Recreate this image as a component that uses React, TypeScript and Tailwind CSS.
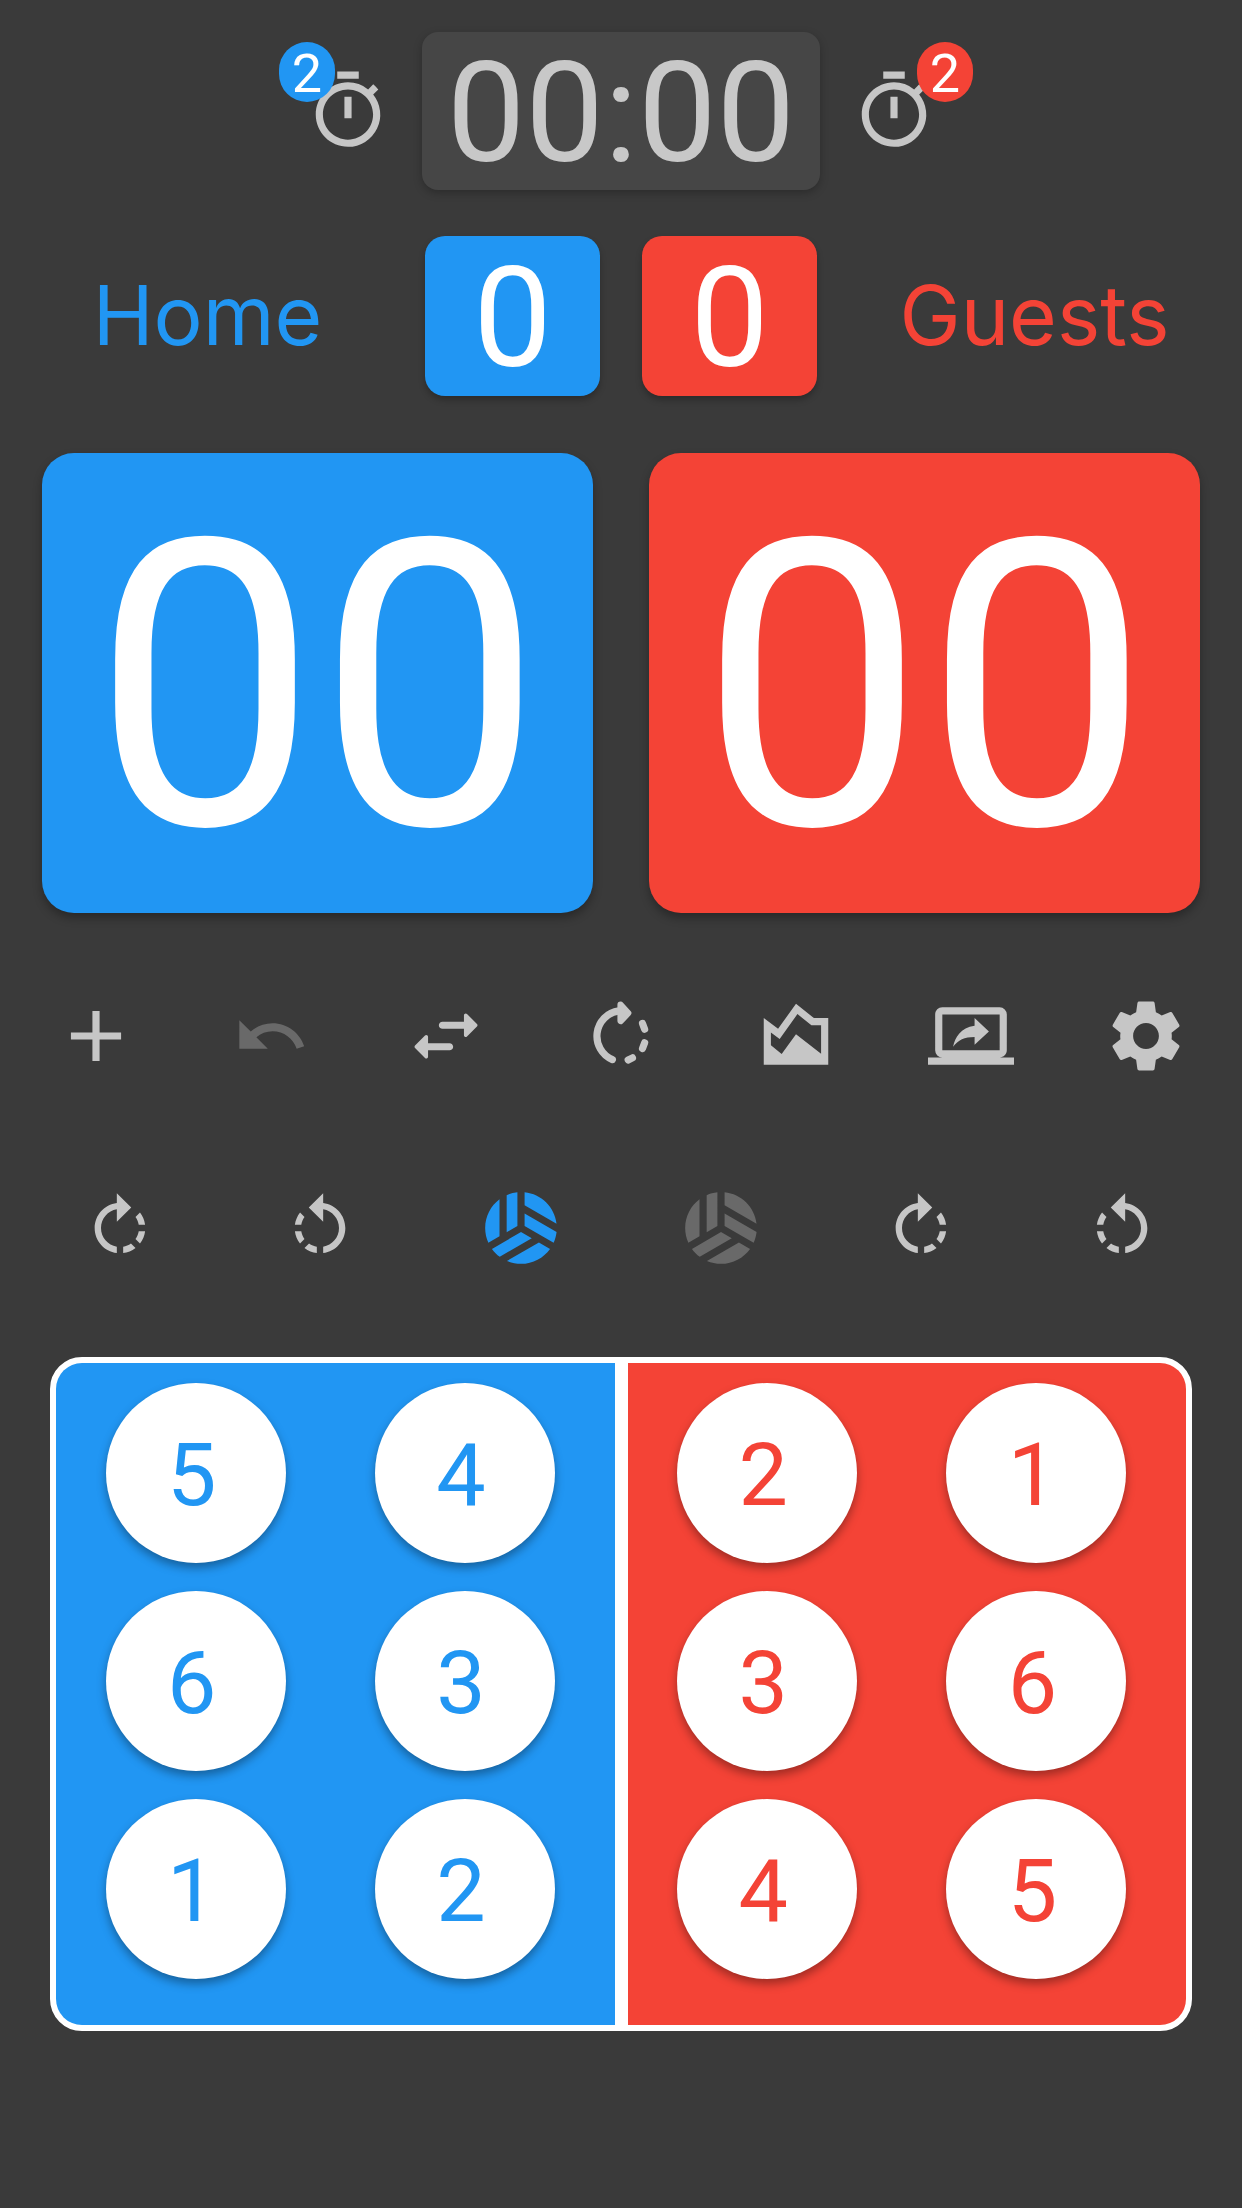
import * as React from "react";
import clsx from "clsx";
import {
  MdAdd,
  MdOutlineAreaChart,
  MdOutlineScreenShare,
  MdOutlineTimer,
  MdRotateLeft,
  MdRotateRight,
  MdSettings,
  MdSportsVolleyball,
  MdUndo,
} from "react-icons/md";

type Team = "home" | "guests";

const teamBg: Record<Team, string> = {
  home: "bg-[#2196f3]",
  guests: "bg-[#f44336]",
};

const teamText: Record<Team, string> = {
  home: "text-[#2196f3]",
  guests: "text-[#f44336]",
};

const lineups: Record<Team, number[]> = {
  home: [5, 4, 6, 3, 1, 2],
  guests: [2, 1, 3, 6, 4, 5],
};

const SwapIcon = ({ className }: { className?: string }) => (
  <svg viewBox="0 0 24 24" fill="currentColor" className={className} aria-hidden="true">
    <path d="M6.14 11.86l-2.78 2.79c-.19.2-.19.51 0 .71l2.78 2.79c.31.32.85.09.85-.35V16H13c.55 0 1-.45 1-1s-.45-1-1-1H6.99v-1.79c0-.45-.54-.67-.85-.35zM20.64 8.65l-2.78-2.79c-.31-.32-.85-.09-.85.35V8H11c-.55 0-1 .45-1 1s.45 1 1 1h6.01v1.79c0 .45.54.67.85.35l2.78-2.79c.2-.19.2-.51 0-.7z" />
  </svg>
);

const RotateRoundedIcon = ({ className }: { className?: string }) => (
  <svg
    viewBox="0 0 24 24"
    fill="none"
    stroke="currentColor"
    strokeWidth="2"
    strokeLinecap="round"
    strokeLinejoin="round"
    className={className}
    aria-hidden="true"
  >
    <path d="M11.4 5a7 7.1 0 0 0-1.8 13.6" />
    <path d="M18 8.5l.6 1.6M18.6 13.9l-.6 1.6M15.2 18.1l-1.2.6" />
    <path d="M11.9 3.3l2.1 2.3-2.1 2.2z" fill="currentColor" strokeWidth="1.8" />
  </svg>
);

const toolbar = [
  { label: "New match", icon: MdAdd },
  { label: "Undo", icon: MdUndo, disabled: true, small: true },
  { label: "Swap sides", icon: SwapIcon },
  { label: "Rotate", icon: RotateRoundedIcon },
  { label: "Statistics", icon: MdOutlineAreaChart },
  { label: "Share screen", icon: MdOutlineScreenShare },
  { label: "Settings", icon: MdSettings },
];

function Timeout({ team, count }: { team: Team; count: number }) {
  return (
    <button type="button" aria-label={`${team} timeouts`} className="relative size-[86px]">
      <MdOutlineTimer className="size-full" />
      <span
        className={clsx(
          "absolute -top-[26px] flex h-[60px] w-14 items-center justify-center rounded-full pt-1 text-[54px] leading-none text-white",
          teamBg[team],
          team === "home" ? "-left-[26px]" : "-right-9"
        )}
      >
        {count}
      </span>
    </button>
  );
}

function SetScore({ team, value }: { team: Team; value: number }) {
  return (
    <button
      type="button"
      aria-label={`${team} sets`}
      className={clsx(
        "flex h-40 w-[175px] items-center justify-center rounded-[20px] pt-1 text-[140px] leading-none text-white shadow-[0_4px_6px_rgba(0,0,0,0.25)]",
        teamBg[team]
      )}
    >
      {value}
    </button>
  );
}

function Score({ team, value }: { team: Team; value: number }) {
  return (
    <button
      type="button"
      aria-label={`${team} points`}
      className={clsx(
        "flex h-[460px] flex-1 items-center justify-center rounded-[32px] pt-2.5 text-[400px] leading-none text-white shadow-[0_5px_10px_rgba(0,0,0,0.3)]",
        teamBg[team]
      )}
    >
      {String(value).padStart(2, "0")}
    </button>
  );
}

function TeamName({ team, name }: { team: Team; name: string }) {
  return (
    <h2
      className={clsx(
        "flex-1 text-center font-['Inter',sans-serif] text-[82px] leading-none",
        teamText[team]
      )}
    >
      {name}
    </h2>
  );
}

function RotateButtons({ team }: { team: Team }) {
  return (
    <>
      <button type="button" aria-label={`Rotate ${team} forward`}>
        <MdRotateRight className="size-[76px]" />
      </button>
      <button type="button" aria-label={`Rotate ${team} back`}>
        <MdRotateLeft className="size-[76px]" />
      </button>
    </>
  );
}

function CourtSide({ team }: { team: Team }) {
  return (
    <div
      className={clsx(
        "grid flex-1 grid-cols-2 justify-items-center gap-y-7 pt-5 pr-[15px] pb-[46px] pl-[5px]",
        team === "home" ? "rounded-l-[26px]" : "rounded-r-[26px]",
        teamBg[team]
      )}
    >
      {lineups[team].map((player) => (
        <button
          key={player}
          type="button"
          className={clsx(
            "flex size-[180px] items-center justify-center rounded-full bg-white pt-1 pr-2 text-[88px] leading-none shadow-[0_5px_10px_rgba(0,0,0,0.35)]",
            teamText[team]
          )}
        >
          {player}
        </button>
      ))}
    </div>
  );
}

export default function App() {
  const [serving, setServing] = React.useState<Team>("home");

  return (
    <main className="min-h-screen bg-[#3a3a3a] pt-8 pb-12 font-['Roboto',sans-serif] text-[#c6c6c6]">
      {/* Match clock and timeouts */}
      <div className="flex items-center justify-center gap-[31px]">
        <Timeout team="home" count={2} />
        <button
          type="button"
          className="flex h-[158px] w-[398px] items-center justify-center rounded-2xl bg-[#464646] pt-1 text-[140px] leading-none text-[#c8c8c8] shadow-[0_3px_8px_rgba(0,0,0,0.25)]"
        >
          00:00
        </button>
        <Timeout team="guests" count={2} />
      </div>

      {/* Team names and sets won */}
      <div className="mt-[46px] flex items-center gap-2.5">
        <TeamName team="home" name="Home" />
        <div className="flex gap-[42px]">
          <SetScore team="home" value={0} />
          <SetScore team="guests" value={0} />
        </div>
        <TeamName team="guests" name="Guests" />
      </div>

      {/* Points */}
      <div className="mt-[57px] flex gap-14 px-[42px]">
        <Score team="home" value={0} />
        <Score team="guests" value={0} />
      </div>

      <nav className="mt-20 grid grid-cols-7 place-items-center px-2">
        {toolbar.map(({ label, icon: Icon, disabled, small }) => (
          <button
            key={label}
            type="button"
            aria-label={label}
            disabled={disabled}
            className="flex size-[86px] items-center justify-center disabled:text-[#696969]"
          >
            <Icon className={small ? "size-[76px]" : "size-[86px]"} />
          </button>
        ))}
      </nav>

      {/* Rotation and serve */}
      <div className="mt-[106px] grid h-[86px] grid-cols-6 place-items-center px-5">
        <RotateButtons team="home" />
        {(["home", "guests"] as Team[]).map((team) => (
          <button
            key={team}
            type="button"
            aria-label={`${team} serve`}
            aria-pressed={serving === team}
            onClick={() => setServing(team)}
            className={serving === team ? teamText[team] : "text-[#696969]"}
          >
            <MdSportsVolleyball className="size-[86px]" />
          </button>
        ))}
        <RotateButtons team="guests" />
      </div>

      {/* Court */}
      <div className="mx-[50px] mt-[86px] flex gap-[13px] rounded-[32px] border-6 border-white bg-white">
        <CourtSide team="home" />
        <CourtSide team="guests" />
      </div>
    </main>
  );
}
